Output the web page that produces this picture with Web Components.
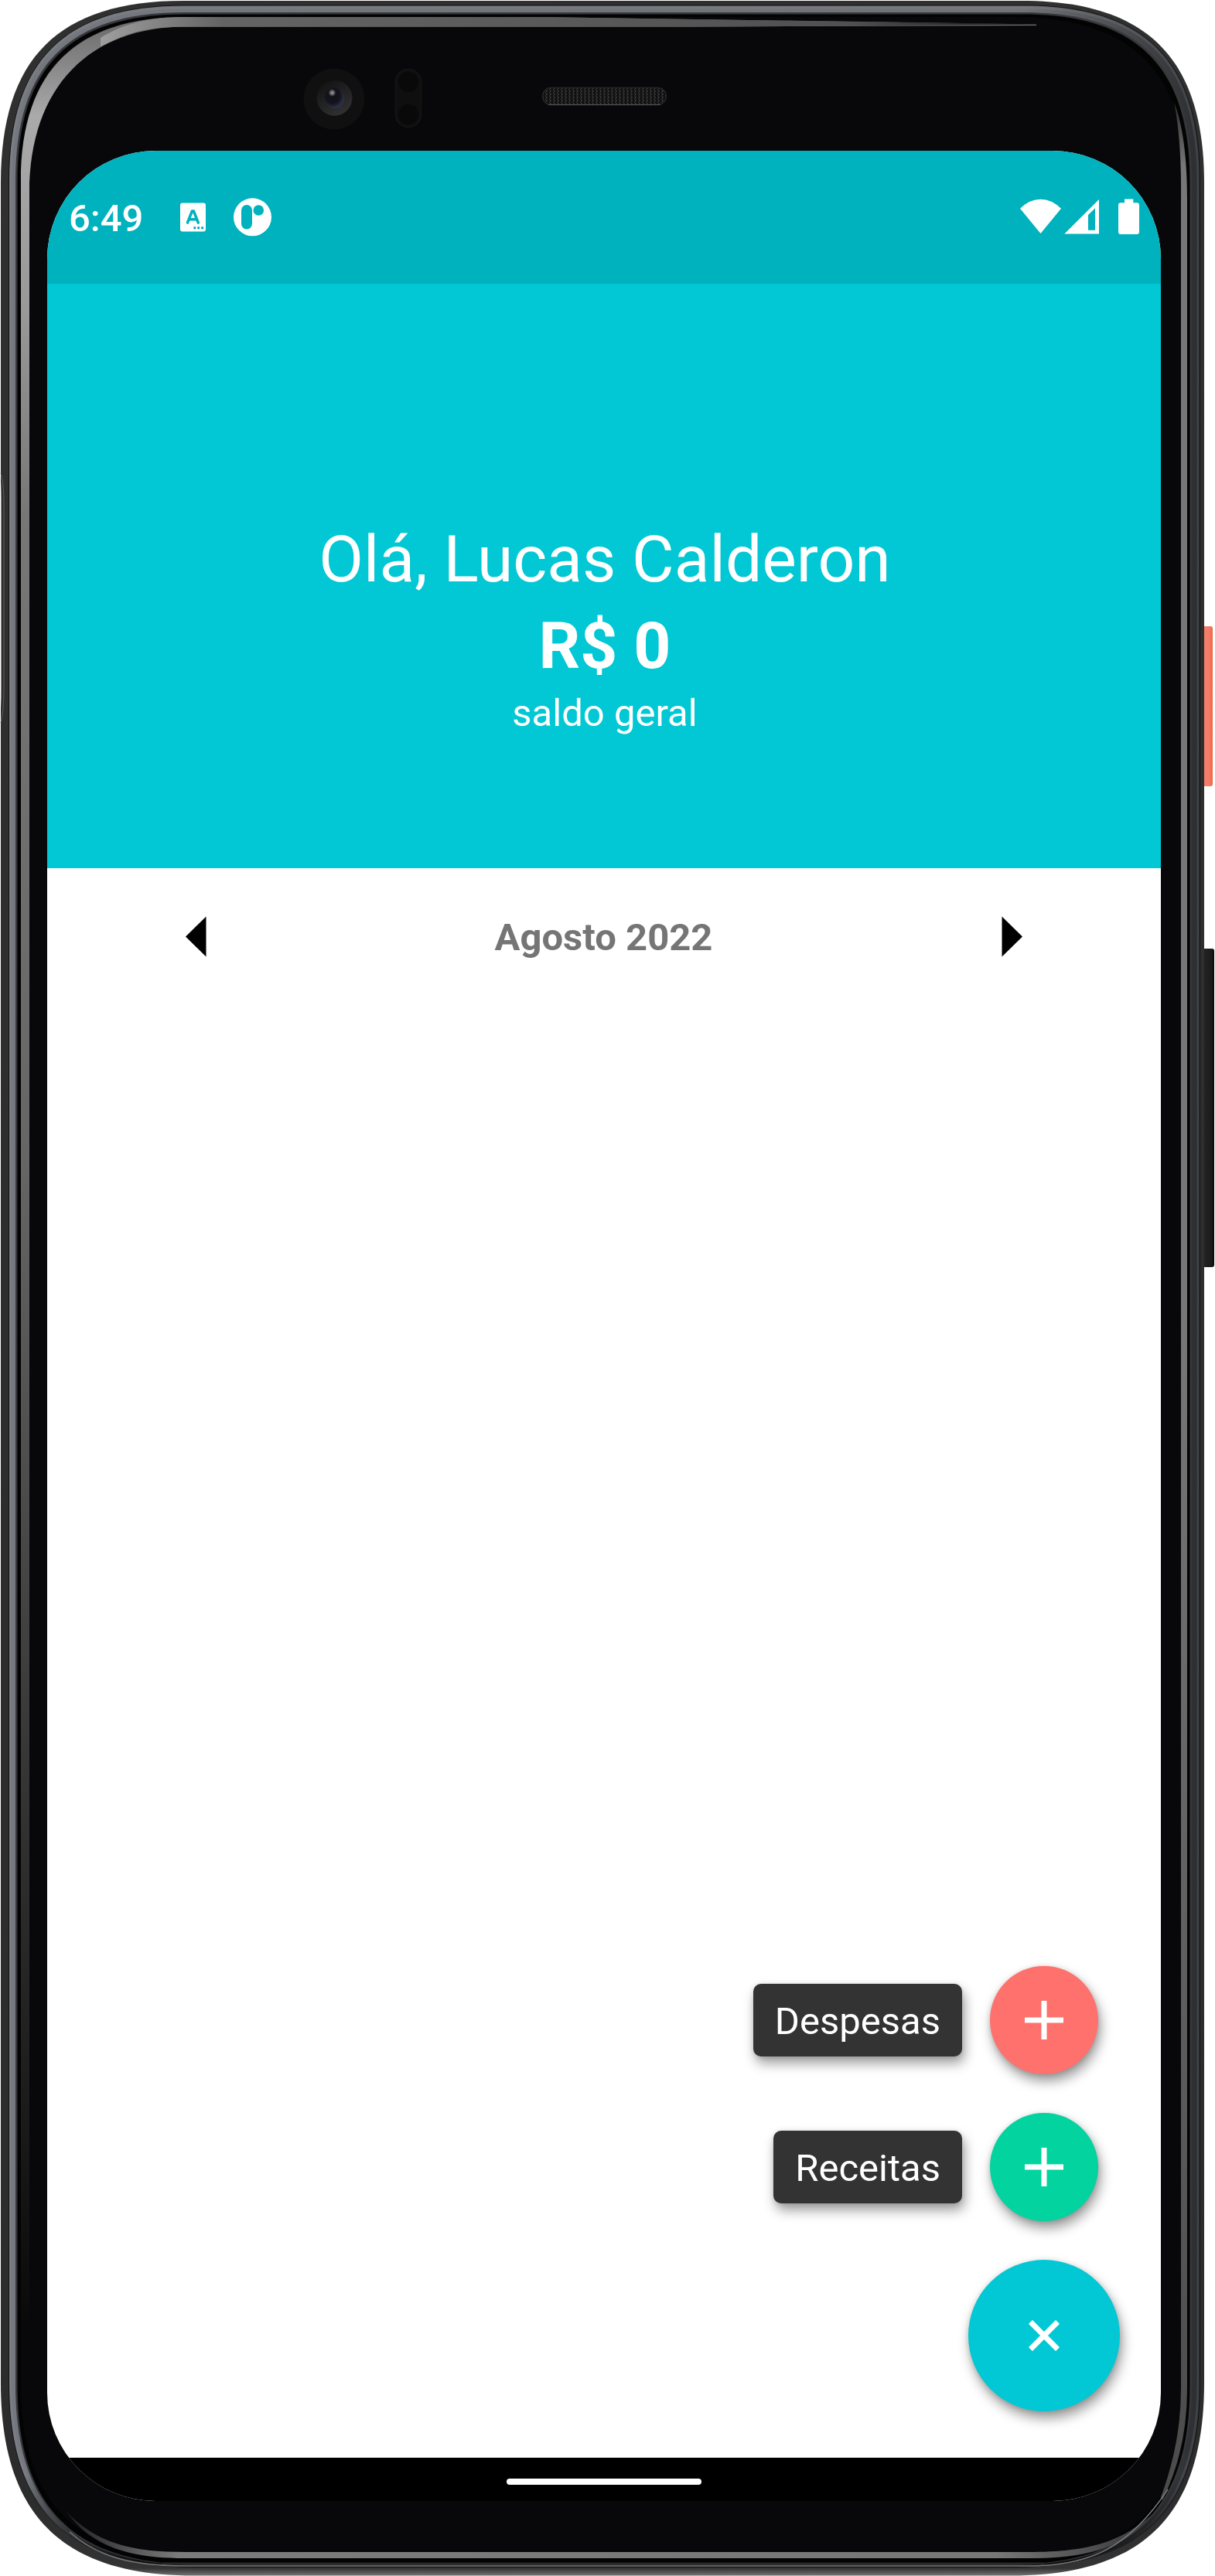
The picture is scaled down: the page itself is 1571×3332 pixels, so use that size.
<!DOCTYPE html>
<html lang="pt-BR">
<head>
<meta charset="utf-8">
<title>Saldo geral</title>
<style>
html,body{margin:0;padding:0;background:#fff}
body{font-family:Roboto,sans-serif;width:1571px;height:3332px;overflow:hidden}
</style>
</head>
<body>
<phone-device>
  <status-bar>6:49</status-bar>
  <balance-header name="Lucas Calderon" amount="R$ 0">saldo geral</balance-header>
  <month-picker>Agosto 2022</month-picker>
  <fab-menu>
    <fab-action color="#ff716c" label="Despesas"></fab-action>
    <fab-action color="#02d39f" label="Receitas"></fab-action>
    <fab-action color="#01c8d4" main></fab-action>
  </fab-menu>
  <nav-bar slot="nav"></nav-bar>
</phone-device>
<script>
const define = (name, html) => customElements.define(name, class extends HTMLElement {
  constructor() {
    super();
    this.attachShadow({mode: 'open'}).innerHTML = typeof html === 'function' ? html(this) : html;
  }
});

// Closed outline with softened corners: l,t,r,b edges; corner = [top-left, top-right, bottom-right, bottom-left]
const shell = (l, t, r, b, c, k = .685) => {
  const [p, q, s, u] = c, m = 1 - k;
  return `M${l + p} ${t}H${r - q}C${r - q * m} ${t} ${r} ${t + q * m} ${r} ${t + q}V${b - s}C${r} ${b - s * m} ${r - s * m} ${b} ${r - s} ${b}H${l + u}C${l + u * m} ${b} ${l} ${b - u * m} ${l} ${b - u}V${t + p}C${l} ${t + p * m} ${l + p * m} ${t} ${l + p} ${t}Z`;
};

define('phone-frame', `
<style>:host{display:block}svg{display:block}</style>
<svg width="1571" height="3332" viewBox="0 0 1571 3332">
  <defs>
    <linearGradient id="coral"><stop offset="0" stop-color="#c84a35"/><stop offset=".3" stop-color="#f0806c"/><stop offset=".7" stop-color="#f27d66"/><stop offset="1" stop-color="#f5623f"/></linearGradient>
    <linearGradient id="vol"><stop offset="0" stop-color="#0c0c0c"/><stop offset=".25" stop-color="#232323"/><stop offset=".8" stop-color="#1b1b1b"/><stop offset="1" stop-color="#060606"/></linearGradient>
    <linearGradient id="outer" x1="0" y1="0" x2="0" y2="3332" gradientUnits="userSpaceOnUse"><stop offset="0" stop-color="#303030"/><stop offset=".97" stop-color="#2c2c2c"/><stop offset=".997" stop-color="#333"/><stop offset="1" stop-color="#777"/></linearGradient>
    <linearGradient id="metal" x1="0" y1="0" x2="1557" y2="0" gradientUnits="userSpaceOnUse"><stop offset="0" stop-color="#74777d"/><stop offset=".85" stop-color="#707277"/><stop offset=".96" stop-color="#3e3f43"/><stop offset="1" stop-color="#2a2b2e"/></linearGradient>
    <linearGradient id="under" x1="0" y1="3200" x2="0" y2="3320" gradientUnits="userSpaceOnUse"><stop offset="0" stop-color="#0a0a0b" stop-opacity="0"/><stop offset=".8" stop-color="#0a0a0b" stop-opacity=".8"/><stop offset="1" stop-color="#0a0a0b"/></linearGradient>
    <linearGradient id="shineL" x1="0" y1="0" x2="0" y2="3332" gradientUnits="userSpaceOnUse"><stop offset="0" stop-color="#5c5c5c"/><stop offset=".045" stop-color="#aaa"/><stop offset=".12" stop-color="#999"/><stop offset=".2" stop-color="#777"/><stop offset=".45" stop-color="#666"/><stop offset=".7" stop-color="#333"/><stop offset=".9" stop-color="#0a0a0b"/></linearGradient>
    <linearGradient id="shineT" x1="100" y1="0" x2="1350" y2="0" gradientUnits="userSpaceOnUse"><stop offset="0" stop-color="#aaa"/><stop offset=".15" stop-color="#646464"/><stop offset=".8" stop-color="#505050"/><stop offset="1" stop-color="#0a0a0b"/></linearGradient>
    <linearGradient id="shineR" x1="0" y1="120" x2="0" y2="3250" gradientUnits="userSpaceOnUse"><stop offset="0" stop-color="#222"/><stop offset=".03" stop-color="#777"/><stop offset=".5" stop-color="#777"/><stop offset="1" stop-color="#4a4a4a"/></linearGradient>
    <linearGradient id="shineB" x1="90" y1="0" x2="1500" y2="0" gradientUnits="userSpaceOnUse"><stop offset="0" stop-color="#222"/><stop offset=".1" stop-color="#7c7c7c"/><stop offset=".85" stop-color="#777"/><stop offset="1" stop-color="#333"/></linearGradient>
    <radialGradient id="lens" cx=".4" cy=".38" r=".7"><stop offset="0" stop-color="#121017"/><stop offset=".55" stop-color="#15131b"/><stop offset="1" stop-color="#333d60"/></radialGradient>
    <radialGradient id="glint"><stop offset="0" stop-color="#aaa"/><stop offset="1" stop-color="#aaa" stop-opacity="0"/></radialGradient>
    <linearGradient id="ring" x1="0" y1="0" x2=".6" y2="1"><stop offset="0" stop-color="#0f0f10"/><stop offset="1" stop-color="#303030"/></linearGradient>
    <pattern id="mesh" width="5" height="4" patternUnits="userSpaceOnUse"><rect width="5" height="4" fill="#111"/><path d="M.5 .5l2 1.4-2 1.6" stroke="#4c4c4c" fill="none"/></pattern>
  </defs>
  <rect x="1553" y="810" width="15" height="207" rx="3" fill="url(#coral)"/>
  <rect x="1553" y="1227" width="17" height="412" rx="3" fill="url(#vol)"/>
  <path d="${shell(1, 1, 1557, 3331.5, [236, 236, 250, 250])}" fill="url(#outer)"/>
  <path d="M0 612Q1.500 620 1.500 650V890Q1.500 915 0 933Z" fill="#fff"/>
  <path d="M1 612Q5 625 5 650V890Q5 920 1 935" fill="none" stroke="#59605c"/>
  <path d="${shell(11, 6.5, 1552, 3321, [228, 228, 240, 240])}" fill="#101112"/>
  <path d="${shell(12, 7.5, 1551, 3320, [226, 226, 238, 238])}" fill="url(#metal)"/>
  <path d="${shell(14, 10, 1549, 3318.5, [222, 222, 236, 236])}" fill="none" stroke="#96999f" stroke-opacity=".18" stroke-width="3"/>
  <path d="${shell(12, 7.5, 1551, 3320, [226, 226, 238, 238])}" fill="url(#under)"/>
  <path d="${shell(20, 16, 1541, 3318, [218, 218, 234, 234])}" fill="#37383b"/>
  <path d="${shell(22.5, 18.5, 1538.5, 3317, [216, 216, 232, 232])}" fill="#030303"/>
  <path d="M210 3316H1350" stroke="#29292a" stroke-width="3"/>
  <path d="${shell(27, 22, 1535, 3309, [212, 225, 226, 226])}" fill="#08080a"/>
  <path d="M27 3000V234C27 90 100 22 239 22H700L1340 31.5V33L900 34.5H239C118 35 38 110 38 250V3000Z" fill="url(#shineL)"/>
  <path d="M130 49C160 30 195 22 239 22H700L1350 31.5L900 34.8H239C190 35 170 40 130 60Z" fill="url(#shineT)"/>
  <path d="M1518 132Q1535 175 1535 260V3090Q1535 3170 1503 3234L1501 3230Q1527 3160 1527 3090V260Q1528 180 1518 132Z" fill="url(#shineR)"/>
  <path d="M85 3248C125 3290 170 3301 240 3301H1330C1410 3301 1450 3288 1495 3248C1455 3297 1405 3309 1330 3309H240C170 3309 120 3296 85 3248Z" fill="url(#shineB)"/>
  <path d="M90 3275C125 3307 170 3319 240 3319H1330C1410 3319 1460 3295 1510 3220" fill="none" stroke="#77797b" stroke-width="1.5"/>
  <circle cx="432" cy="128" r="39.5" fill="#101011"/>
  <circle cx="432.500" cy="126.800" r="23" fill="url(#ring)"/>
  <ellipse cx="432.500" cy="126.500" rx="12.500" ry="13.500" fill="url(#lens)"/>
  <circle cx="429.500" cy="120" r="5" fill="url(#glint)"/>
  <rect x="511.500" y="89.500" width="33" height="75" rx="16.500" fill="#0f0f10" stroke="#131314" stroke-width="2"/>
  <circle cx="528" cy="106" r="13" fill="#09090a"/><circle cx="528" cy="148" r="13" fill="#09090a"/>
  <rect x="701.500" y="113.500" width="160" height="22" rx="11" fill="url(#mesh)" stroke="#252525" stroke-width="1.500"/>
  <path d="M709 135.500H854" stroke="#555"/>
</svg>`);

define('phone-device', `
<style>
:host{display:flex;position:relative;isolation:isolate;box-sizing:border-box;width:1571px;height:3332px;padding:195px 70px 97px 61px}
phone-frame{position:absolute;inset:0;z-index:-1}
.screen{flex:1;display:flex;flex-direction:column;border-radius:140px;overflow:hidden;background:#fff}
.app{flex:1;display:flex;flex-direction:column;min-height:0}
</style>
<phone-frame></phone-frame>
<div class="screen"><div class="app"><slot></slot></div><slot name="nav"></slot></div>`);

define('status-bar', `
<style>
:host{display:flex;align-items:center;justify-content:space-between;box-sizing:border-box;height:172px;flex:none;padding:0 28px;background:#00b2be;color:#fff;font:500 49px/58px Roboto,sans-serif}
div{display:flex;align-items:center}
svg{display:block}
.time{width:95px;margin-right:49px;padding-top:4px;white-space:nowrap}
</style>
<div><span class="time"><slot></slot></span>
<svg width="120" height="50" viewBox="233 256.500 120 50">
  <rect x="233" y="263" width="33" height="37" rx="3" fill="#fff"/>
  <path d="M242.500 288.500L248.400 273.500H250.400L256.300 288.500M244.500 284.300H254" fill="none" stroke="#00b2be" stroke-width="3.500" stroke-linecap="round" stroke-linejoin="round"/>
  <g fill="#00b2be"><circle cx="251.800" cy="295.300" r="1.700"/><circle cx="256.700" cy="295.300" r="1.700"/><circle cx="261.600" cy="295.300" r="1.700"/></g>
  <circle cx="326.500" cy="281.300" r="24.500" fill="#fff"/>
  <rect x="312" y="265.500" width="14" height="31.500" rx="7" fill="#00b2be"/><circle cx="334.300" cy="272.500" r="6.800" fill="#00b2be"/>
</svg></div>
<svg width="154" height="50" viewBox="1319 256.500 154 50" fill="#fff">
  <path d="M1319 270.300Q1331 258.200 1345.500 258.200T1372 270.300L1345.500 302.500Z"/>
  <path fill-rule="evenodd" d="M1376.300 303L1421 258.500V303ZM1407 298.300H1416V269.700L1407 278.500Z"/>
  <path d="M1454 258h11.300v4.700H1470q3 0 3 3v34.800q0 3-3 3h-21q-3 0-3-3v-34.800q0-3 3-3h5z"/>
</svg>`);

define('balance-header', el => `
<style>
:host{display:flex;flex-direction:column;align-items:center;justify-content:center;height:756px;flex:none;background:#01c8d4;color:#fff;text-align:center}
.hi{font-size:84px;line-height:112px}
.sum{font-size:84px;line-height:112px;font-weight:700}
.sub{font-size:49px;line-height:62px}
.box{padding:131px 0 0 2px}
</style>
<div class="box"><div class="hi">Olá, ${el.getAttribute('name')}</div><div class="sum">${el.getAttribute('amount')}</div><div class="sub"><slot></slot></div></div>`);

define('month-picker', `
<style>
:host{display:flex;align-items:center;justify-content:space-between;box-sizing:border-box;height:176px;flex:none;padding:0 179px;color:#757575;font:700 49px/58px Roboto,sans-serif}
svg{display:block}
span{padding:3px 1px 0 0}
</style>
<svg width="27" height="53" viewBox="0 0 27 53"><path d="M26.500 .5V52.500L0 26.500Z" fill="#000"/></svg>
<span><slot></slot></span>
<svg width="27" height="53" viewBox="0 0 27 53"><path d="M.5 .5V52.500L27 26.500Z" fill="#000"/></svg>`);

define('fab-menu', `
<style>
:host{display:flex;flex:1;flex-direction:column;justify-content:flex-end;align-items:flex-end;gap:50px;padding:0 53px 60px 0}
</style><slot></slot>`);

define('fab-action', el => {
  const main = el.hasAttribute('main'), label = el.getAttribute('label');
  return `
<style>
:host{display:flex;align-items:center;gap:36px;${main ? '' : 'margin-right:28px'}}
.label{box-sizing:border-box;height:94px;padding:0 28px;border-radius:10px;background:#333;color:#fff;font:400 49px/97px Roboto,sans-serif;box-shadow:0 1px 6px rgba(0,0,0,.12),3px 9px 16px rgba(0,0,0,.38)}
.dot{display:flex;align-items:center;justify-content:center;width:${main ? 196 : 140}px;height:${main ? 196 : 140}px;border-radius:50%;background:${el.getAttribute('color')};box-shadow:0 1px 6px rgba(0,0,0,.12),3px 9px 16px rgba(0,0,0,.4)}
svg{display:block;${main ? 'transform:rotate(45deg)' : ''}}
</style>
${label ? `<span class="label">${label}</span>` : ''}
<span class="dot"><svg width="50" height="50" viewBox="0 0 50 50"><path d="M0 25H50M25 0V50" stroke="#fff" stroke-width="7"/></svg></span>`;
});

define('nav-bar', `
<style>
:host{display:flex;align-items:center;justify-content:center;box-sizing:border-box;height:56px;padding-top:5px;flex:none;background:#000}
i{width:252px;height:8px;border-radius:4px;background:#fff}
</style><i></i>`);
</script>
</body>
</html>
